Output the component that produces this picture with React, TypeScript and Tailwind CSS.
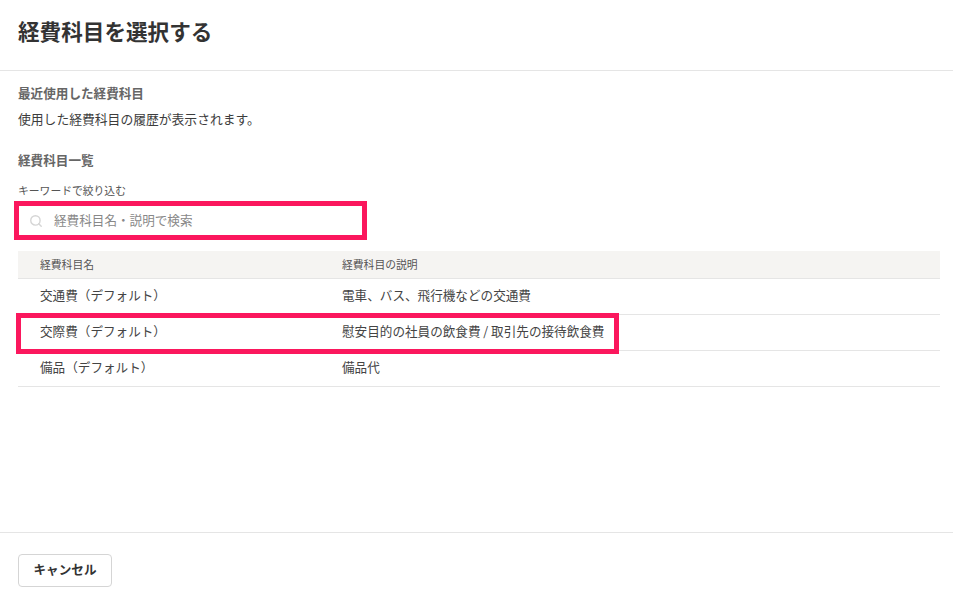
import { Search } from "lucide-react";

const font = { fontFamily: '"Noto Sans CJK JP", "Noto Sans", sans-serif' };

const rows = [
  ["交通費（デフォルト）", "電車、バス、飛行機などの交通費"],
  ["交際費（デフォルト）", "慰安目的の社員の飲食費 / 取引先の接待飲食費"],
  ["備品（デフォルト）", "備品代"],
];

export default function App() {
  return (
    <div className="relative flex h-[600px] w-[953px] flex-col overflow-hidden bg-white text-[#333]" style={font}>
      <header className="flex h-[71px] shrink-0 items-start border-b border-[#e5e5e5] px-[18px] pt-[15px]">
        <h1 className="text-[21.6px] font-bold leading-[32px]">経費科目を選択する</h1>
      </header>
      <main className="flex-1 pl-[18px] pr-[13px]">
        <h2 className="mt-[12px] text-[12.6px] font-bold leading-[20px] text-[#666]">最近使用した経費科目</h2>
        <p className="mt-[6px] text-[12.8px] leading-[20px] text-[#3c3c3c]">使用した経費科目の履歴が表示されます。</p>
        <h2 className="mt-[21px] text-[12.6px] font-bold leading-[20px] text-[#666]">経費科目一覧</h2>
        <label className="mt-[12px] block text-[10.8px] leading-[16px] text-[#555]">キーワードで絞り込む</label>
        <div className="relative mt-[3px] flex h-[39px] w-[353px] -translate-x-[4px] items-center border-[5px] border-[#fb175d] bg-white pl-[10px]">
          <Search className="h-[14px] w-[14px] text-[#d5d5d5]" strokeWidth={2.4} />
          <span className="ml-[11px] pb-[2px] text-[12.6px] leading-[20px] text-[#888]">経費科目名・説明で検索</span>
        </div>
        <table className="mt-[11px] w-full table-fixed border-collapse">
          <thead>
            <tr className="h-[27px] border-b border-[#e5e5e5] bg-[#f5f4f2] text-left text-[10.8px] text-[#555]">
              <th className="w-[324px] pl-[22px] font-normal">経費科目名</th>
              <th className="font-normal">経費科目の説明</th>
            </tr>
          </thead>
          <tbody>
            {rows.map(([a, b], i) => (
              <tr key={a} className="h-[36px] border-b border-[#e5e5e5] text-[12.6px] text-[#444]">
                <td className="relative pb-[2px] pl-[22px]">
                  {a}
                  {i === 1 && (
                    <span className="absolute left-[-2px] top-[-2px] h-[41px] w-[603px] border-[5px] border-[#fb175d]" />
                  )}
                </td>
                <td className="pb-[2px]">{b}</td>
              </tr>
            ))}
          </tbody>
        </table>
      </main>
      <footer className="flex h-[68px] shrink-0 items-start border-t border-[#e5e5e5] px-[18px] pt-[21px]">
        <button className="h-[33px] w-[94px] rounded-[4px] border border-[#d5d5d5] bg-white pb-[3px] text-[12.6px] font-bold text-[#333]">
          キャンセル
        </button>
      </footer>
    </div>
  );
}
